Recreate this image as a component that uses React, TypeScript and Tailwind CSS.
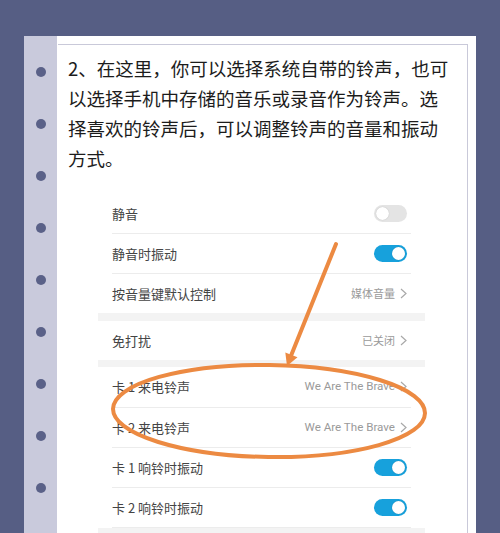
import { FC } from "react";

const Toggle: FC<{ on?: boolean }> = ({ on }) => (
  <div
    className={
      on
        ? "w-[33px] h-[17px] rounded-full bg-[#17a1dc] flex items-center justify-end px-[2px]"
        : "w-[33px] h-[17px] rounded-full bg-[#e4e4e4] flex items-center justify-start px-[2px]"
    }
  >
    <div className="w-[13px] h-[13px] rounded-full bg-white shadow-[0_0_1px_rgba(0,0,0,0.25)]" />
  </div>
);

const Chevron: FC = () => (
  <svg width="7" height="11" viewBox="0 0 7 11" className="ml-[5px]">
    <polyline points="1,1 6,5.5 1,10" fill="none" stroke="#a8a8a8" strokeWidth="1.2" />
  </svg>
);

const Value: FC<{ text: string; latin?: boolean }> = ({ text, latin }) => (
  <div className="flex items-center">
    <span
      className={
        latin
          ? "text-[11.6px] text-[#9a9a9a] font-['Roboto',sans-serif]"
          : "text-[11px] text-[#9a9a9a]"
      }
    >
      {text}
    </span>
    <Chevron />
  </div>
);

const Row: FC<{ label: string; right: React.ReactNode; line?: boolean; h?: string }> = ({
  label,
  right,
  line = true,
  h = "h-[40px]",
}) => (
  <div className="px-[14px]">
    <div
      className={
        (line ? "border-b border-[#ececec] " : "") +
        h +
        " flex items-center justify-between pr-[4px]"
      }
    >
      <span className="text-[13px] text-[#444]">{label}</span>
      {right}
    </div>
  </div>
);

export default function App() {
  const dots = [0, 1, 2, 3, 4, 5, 6, 7, 8, 9];
  return (
    <div className="w-[500px] h-[533px] overflow-hidden bg-[#565e84] pt-[36px] px-[24px] font-['Noto_Sans_CJK_SC','Noto_Sans',sans-serif]">
      <div className="flex bg-white h-[600px]">
        {/* bullet strip */}
        <div className="w-[33px] bg-[#c9cadc] flex flex-col items-center pt-[31px] gap-[42px]">
          {dots.map((d) => (
            <div key={d} className="w-[10px] h-[10px] rounded-full bg-[#5a6188] shrink-0" />
          ))}
        </div>

        <div className="flex-1 pt-[8px] pr-[8px]">
          <div className="ml-[1px] h-full border-t border-r border-[#c9c9d9] pt-[8px] pl-[10px]">
            <p className="text-[18.5px] leading-[30px] text-[#1c1c1c]">
              2、在这里，你可以选择系统自带的铃声，也可
              <br />
              以选择手机中存储的音乐或录音作为铃声。选
              <br />
              择喜欢的铃声后，可以调整铃声的音量和振动
              <br />
              方式。
            </p>

            {/* phone screenshot */}
            <div className="relative ml-[30px] mt-[21px] w-[327px] bg-white">
              <Row label="静音" right={<Toggle />} />
              <Row label="静音时振动" right={<Toggle on />} />
              <Row label="按音量键默认控制" right={<Value text="媒体音量" />} line={false} h="h-[39px]" />
              <div className="h-[8px] bg-[#f3f3f3]" />
              <Row label="免打扰" right={<Value text="已关闭" />} line={false} h="h-[39px]" />
              <div className="h-[7px] bg-[#f3f3f3]" />
              <Row label="卡 1 来电铃声" right={<Value text="We Are The Brave" latin />} h="h-[41px]" />
              <Row label="卡 2 来电铃声" right={<Value text="We Are The Brave" latin />} />
              <Row label="卡 1 响铃时振动" right={<Toggle on />} />
              <Row label="卡 2 响铃时振动" right={<Toggle on />} />
              <div className="h-[8px] bg-[#f3f3f3]" />

              <svg
                className="absolute left-0 top-0 overflow-visible pointer-events-none"
                width="327"
                height="300"
                viewBox="0 0 327 300"
              >
                <ellipse
                  cx="171"
                  cy="217"
                  rx="156"
                  ry="46"
                  fill="none"
                  stroke="#ec8a42"
                  strokeWidth="4"
                  transform="rotate(0.8 171 217)"
                />
                <line x1="238" y1="50" x2="193.4" y2="160.8" stroke="#ec8a42" strokeWidth="4" strokeLinecap="round" />
                <polygon points="189,172 199.5,163.2 187.3,158.4" fill="#ec8a42" />
              </svg>
            </div>
          </div>
        </div>
      </div>
    </div>
  );
}
